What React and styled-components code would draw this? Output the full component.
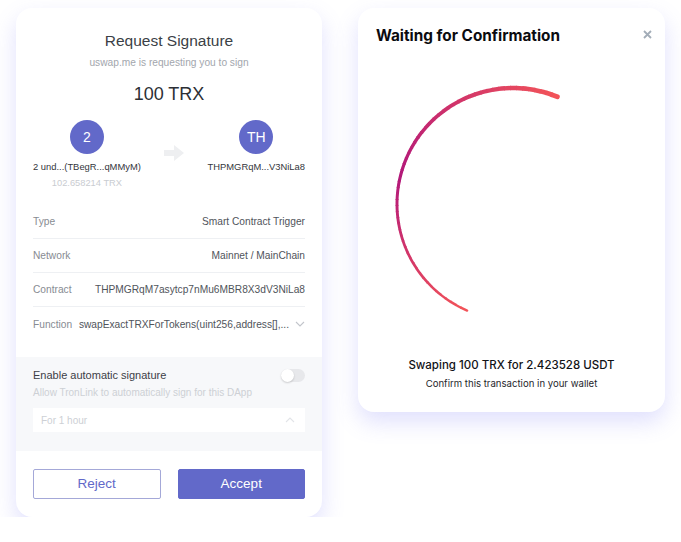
import React from 'react';
import styled, { createGlobalStyle } from 'styled-components';

const PURPLE = '#6269c9';

const GlobalStyle = createGlobalStyle`
  html, body {
    margin: 0;
    padding: 0;
    background: #ffffff;
  }
  body {
    font-family: 'Liberation Sans', Arial, sans-serif;
  }
`;

const Page = styled.div`
  display: flex;
  align-items: flex-start;
  gap: 36px;
  padding: 8px 0 0 16px;
`;

const Card = styled.div`
  background: #ffffff;
  border-radius: 16px;
  box-shadow: 0 10px 22px rgba(112, 112, 245, 0.22);
  overflow: hidden;
  position: relative;
`;

const SignCard = styled(Card)`
  width: 306px;
  height: 509px;
  display: flex;
  flex-direction: column;
  font-family: 'Liberation Sans', Arial, sans-serif;
`;

const Body = styled.div`
  padding: 23px 17px 0;
  display: flex;
  flex-direction: column;
`;

const Heading = styled.div`
  text-align: center;
  font-size: 15.5px;
  line-height: 20px;
  color: #3b3f46;
`;

const Sub = styled.div`
  text-align: center;
  font-size: 10.2px;
  line-height: 14px;
  color: #a2a6ad;
  margin-top: 5px;
`;

const Amount = styled.div`
  text-align: center;
  font-size: 18px;
  line-height: 24px;
  color: #2c2f35;
  margin-top: 12px;
`;

const Parties = styled.div`
  display: flex;
  justify-content: space-between;
  align-items: flex-start;
  margin-top: 14px;
`;

const Party = styled.div`
  display: flex;
  flex-direction: column;
  align-items: center;
`;

const Avatar = styled.div`
  width: 34px;
  height: 34px;
  border-radius: 50%;
  background: ${PURPLE};
  color: #fff;
  font-size: 14px;
  display: flex;
  align-items: center;
  justify-content: center;
`;

const PartyName = styled.div`
  font-size: 9.4px;
  line-height: 14px;
  color: #33363c;
  margin-top: 6px;
  white-space: nowrap;
`;

const Balance = styled.div`
  font-size: 9.3px;
  line-height: 14px;
  color: #c9ccd1;
  margin-top: 2px;
`;

const ArrowWrap = styled.div`
  padding-top: 25px;
  display: flex;
`;

const Rows = styled.div`
  margin-top: 15px;
  margin-bottom: 16px;
`;

const Row = styled.div`
  display: flex;
  align-items: center;
  justify-content: space-between;
  height: 34px;
  font-size: 10.2px;
  border-bottom: ${p => (p.$last ? 'none' : '1px solid #eef0f3')};
  box-sizing: border-box;
`;

const Label = styled.span`
  color: #878b92;
  white-space: nowrap;
  margin-right: 6px;
`;

const Value = styled.span`
  color: #50545b;
  white-space: nowrap;
  display: flex;
  align-items: center;
  gap: 6px;
`;

const AutoSection = styled.div`
  background: #f7f8fa;
  padding: 10px 17px 19px;
  display: flex;
  flex-direction: column;
`;

const AutoHead = styled.div`
  display: flex;
  justify-content: space-between;
  align-items: center;
`;

const AutoTitle = styled.div`
  font-size: 11px;
  line-height: 16px;
  color: #3d4047;
`;

const Toggle = styled.div`
  width: 24px;
  height: 13px;
  border-radius: 7px;
  background: #e7e8eb;
  position: relative;
  &::after {
    content: '';
    position: absolute;
    left: 0;
    top: 0;
    width: 13px;
    height: 13px;
    border-radius: 50%;
    background: #fff;
    box-shadow: 0 1px 2px rgba(0, 0, 0, 0.18);
  }
`;

const AutoHint = styled.div`
  font-size: 10px;
  line-height: 14px;
  color: #cdd0d5;
  margin-top: 3px;
`;

const Select = styled.div`
  margin-top: 8px;
  height: 24px;
  background: #fff;
  display: flex;
  align-items: center;
  justify-content: space-between;
  padding: 0 10px 0 8px;
  font-size: 10px;
  color: #cdd0d5;
`;

const Actions = styled.div`
  display: flex;
  gap: 17px;
  padding: 18px 17px 18px;
`;

const Button = styled.button`
  all: unset;
  flex: 1;
  height: 30px;
  box-sizing: border-box;
  text-align: center;
  font-family: 'Liberation Sans', Arial, sans-serif;
  font-size: 13.5px;
  line-height: 28px;
  border-radius: 2px;
  border: 1px solid ${p => (p.$primary ? PURPLE : '#a4a8d8')};
  background: ${p => (p.$primary ? PURPLE : '#fff')};
  color: ${p => (p.$primary ? '#fff' : PURPLE)};
  cursor: pointer;
`;

const WaitCard = styled(Card)`
  width: 307px;
  height: 404px;
  box-sizing: border-box;
  padding: 18px 18px 0;
  display: flex;
  flex-direction: column;
  font-family: Inter, 'Noto Sans', sans-serif;
`;

const WaitTitle = styled.div`
  font-size: 15.3px;
  font-weight: 700;
  line-height: 20px;
  color: #0b0b0f;
`;

const Close = styled.button`
  all: unset;
  position: absolute;
  top: 20px;
  right: 12px;
  width: 12px;
  height: 12px;
  display: flex;
  align-items: center;
  justify-content: center;
  cursor: pointer;
`;

const Spinner = styled.div`
  display: flex;
  justify-content: center;
  margin-top: 38px;
  padding-left: 3px;
`;

const Swap = styled.div`
  margin-top: 32px;
  text-align: center;
  font-size: 11.5px;
  font-weight: 500;
  line-height: 18px;
  color: #111216;
`;

const Confirm = styled.div`
  margin-top: 3px;
  text-align: center;
  font-size: 9.6px;
  line-height: 14px;
  color: #25262b;
`;

const ROWS = [
  { label: 'Type', value: 'Smart Contract Trigger' },
  { label: 'Network', value: 'Mainnet / MainChain' },
  { label: 'Contract', value: 'THPMGRqM7asytcp7nMu6MBR8X3dV3NiLa8' },
  { label: 'Function', value: 'swapExactTRXForTokens(uint256,address[],...', more: true },
];

const Chevron = ({ up, color }) => (
  <svg width="10" height="6" viewBox="0 0 10 6">
    <path
      d={up ? 'M1 5 L5 1 L9 5' : 'M1 1 L5 5 L9 1'}
      fill="none"
      stroke={color}
      strokeWidth="1.1"
    />
  </svg>
);

const BlockArrow = () => (
  <svg width="20" height="16" viewBox="0 0 20 16">
    <path d="M0 5 H10 V0 L20 8 L10 16 V11 H0 Z" fill="#eeeff1" />
  </svg>
);

const mix = (a, b, t) => a.map((v, i) => Math.round(v + (b[i] - v) * t));

// tapered arc, drawn as short segments whose width and colour shift along the way
const ArcSpinner = () => {
  const cx = 120;
  const cy = 120;
  const r = 116;
  const start = -67.5;
  const end = -246.7;
  const n = 60;
  const red = [243, 84, 88];
  const mag = [178, 24, 122];
  const segs = [];
  for (let i = 0; i < n; i++) {
    const t0 = i / n;
    const t1 = (i + 1) / n;
    const a0 = ((start + (end - start) * t0 + (i ? 0.4 : 0)) * Math.PI) / 180;
    const a1 = ((start + (end - start) * t1) * Math.PI) / 180;
    const tm = (t0 + t1) / 2;
    const col = tm < 0.55 ? mix(red, mag, tm / 0.55) : mix(mag, red, (tm - 0.55) / 0.45);
    const w = tm < 0.6 ? 4.8 - (1.8 * tm) / 0.6 : 3 - (0.6 * (tm - 0.6)) / 0.4;
    const x0 = cx + r * Math.cos(a0);
    const y0 = cy + r * Math.sin(a0);
    const x1 = cx + r * Math.cos(a1);
    const y1 = cy + r * Math.sin(a1);
    segs.push(
      <path
        key={i}
        d={`M${x0.toFixed(2)} ${y0.toFixed(2)} A${r} ${r} 0 0 0 ${x1.toFixed(2)} ${y1.toFixed(2)}`}
        fill="none"
        stroke={`rgb(${col.join(',')})`}
        strokeWidth={w}
        strokeLinecap={i === 0 || i === n - 1 ? 'round' : 'butt'}
      />
    );
  }
  return (
    <svg width="240" height="240" viewBox="0 0 240 240">
      {segs}
    </svg>
  );
};

export default function App() {
  return (
    <>
      <GlobalStyle />
      <Page>
        <SignCard>
          <Body>
            <Heading>Request Signature</Heading>
            <Sub>uswap.me is requesting you to sign</Sub>
            <Amount>100 TRX</Amount>
            <Parties>
              <Party>
                <Avatar>2</Avatar>
                <PartyName>2 und...(TBegR...qMMyM)</PartyName>
                <Balance>102.658214 TRX</Balance>
              </Party>
              <ArrowWrap>
                <BlockArrow />
              </ArrowWrap>
              <Party>
                <Avatar>TH</Avatar>
                <PartyName>THPMGRqM...V3NiLa8</PartyName>
              </Party>
            </Parties>
            <Rows>
              {ROWS.map((row, i) => (
                <Row key={row.label} $last={i === ROWS.length - 1}>
                  <Label>{row.label}</Label>
                  <Value>
                    {row.value}
                    {row.more && <Chevron color="#c2c5cb" />}
                  </Value>
                </Row>
              ))}
            </Rows>
          </Body>
          <AutoSection>
            <AutoHead>
              <AutoTitle>Enable automatic signature</AutoTitle>
              <Toggle />
            </AutoHead>
            <AutoHint>Allow TronLink to automatically sign for this DApp</AutoHint>
            <Select>
              For 1 hour
              <Chevron up color="#e2e4e8" />
            </Select>
          </AutoSection>
          <Actions>
            <Button type="button">Reject</Button>
            <Button type="button" $primary>
              Accept
            </Button>
          </Actions>
        </SignCard>

        <WaitCard>
          <WaitTitle>Waiting for Confirmation</WaitTitle>
          <Close type="button" aria-label="close">
            <svg width="9" height="9" viewBox="0 0 9 9">
              <path d="M1 1 L8 8 M8 1 L1 8" stroke="#a3adb8" strokeWidth="1.8" />
            </svg>
          </Close>
          <Spinner>
            <ArcSpinner />
          </Spinner>
          <Swap>Swaping 100 TRX for 2.423528 USDT</Swap>
          <Confirm>Confirm this transaction in your wallet</Confirm>
        </WaitCard>
      </Page>
    </>
  );
}
